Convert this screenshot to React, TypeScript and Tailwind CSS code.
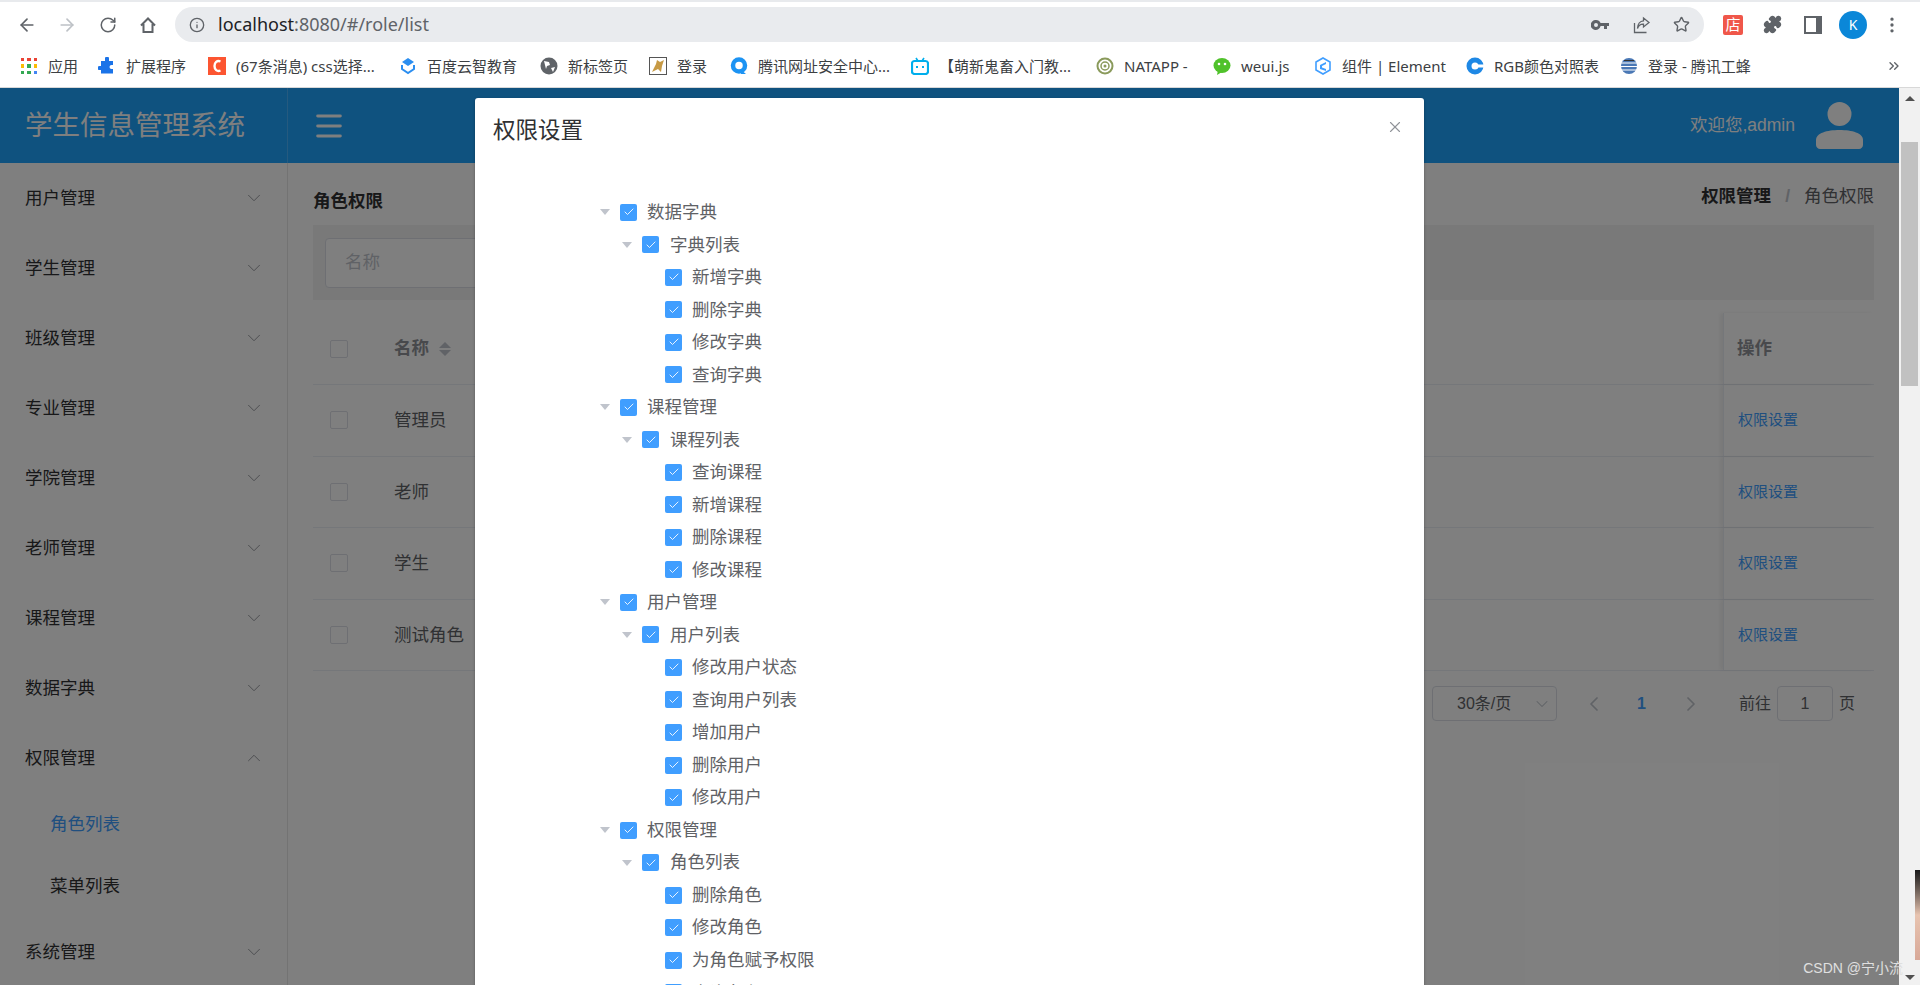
import type { ReactNode } from "react";
import { ChevronDown, ChevronUp, ChevronLeft, ChevronRight, ArrowLeft, ArrowRight, RotateCw, Info, Star, Puzzle, EllipsisVertical, ChevronsRight, X, Check, Menu } from "lucide-react";

const Ico = ({ children }: { children: ReactNode }) => (
  <svg viewBox="0 0 18 18" className="h-[18px] w-[18px] shrink-0">{children}</svg>
);

const appColors = ["#ea4335", "#ea4335", "#ea4335", "#fbbc04", "#34a853", "#fbbc04", "#34a853", "#34a853", "#4285f4"];

const bookmarks: { label: string; w: string; icon: ReactNode }[] = [
  {
    label: "应用",
    w: "w-[78px]",
    icon: (
      <span className="grid h-[18px] w-[18px] shrink-0 grid-cols-3 gap-[3px] p-[1px]">
        {appColors.map((c, i) => (
          <span key={i} style={{ backgroundColor: c }} />
        ))}
      </span>
    ),
  },
  {
    label: "扩展程序",
    w: "w-[110px]",
    icon: (
      <Ico>
        <path fill="#1a73e8" d="M7 1.5a2 2 0 0 1 4 0V4h4v4h-1.5a2 2 0 0 0 0 4H15v4.5H3V13H1.5a2 2 0 0 1 0-4H3V4h4z" />
      </Ico>
    ),
  },
  {
    label: "(67条消息) css选择...",
    w: "w-[191px]",
    icon: (
      <Ico>
        <rect width="18" height="18" fill="#fc5531" />
        <path fill="none" stroke="#fff" strokeWidth="2.4" d="M12.5 4.5C9 3 6.5 5.5 6.5 9s2.5 6 6 4.5" />
      </Ico>
    ),
  },
  {
    label: "百度云智教育",
    w: "w-[141px]",
    icon: (
      <Ico>
        <path fill="#2b8ef0" d="M9 1l6 4-6 4-6-4z" />
        <path fill="none" stroke="#2b8ef0" strokeWidth="2" d="M3 8v4l6 4 6-4V8" />
      </Ico>
    ),
  },
  {
    label: "新标签页",
    w: "w-[109px]",
    icon: (
      <Ico>
        <circle cx="9" cy="9" r="8.5" fill="#5f6368" />
        <path fill="#fff" d="M4 4l5 1 1 3-3 1-1 3zM11 11l4-1-2 5z" />
      </Ico>
    ),
  },
  {
    label: "登录",
    w: "w-[81px]",
    icon: (
      <Ico>
        <rect x="0.5" y="0.5" width="17" height="17" fill="#fff" stroke="#555" />
        <path fill="#c79a45" d="M3 15l4-8 1-4 3 2 4-2-2 6-1 6-3-3z" />
      </Ico>
    ),
  },
  {
    label: "腾讯网址安全中心...",
    w: "w-[181px]",
    icon: (
      <Ico>
        <circle cx="9" cy="8.5" r="6" fill="none" stroke="#1c93f3" strokeWidth="4.5" />
        <path fill="#1c93f3" d="M10 12l6 5-5 0z" />
      </Ico>
    ),
  },
  {
    label: "【萌新鬼畜入门教...",
    w: "w-[185px]",
    icon: (
      <Ico>
        <path stroke="#00aeec" strokeWidth="1.6" d="M5 1l2 3M13 1l-2 3" />
        <rect x="1" y="4" width="16" height="13" rx="2.5" fill="none" stroke="#00aeec" strokeWidth="2.2" />
        <path stroke="#00aeec" strokeWidth="2" d="M6 9v2M12 9v2" />
      </Ico>
    ),
  },
  {
    label: "NATAPP -",
    w: "w-[117px]",
    icon: (
      <Ico>
        <circle cx="9" cy="9" r="7.5" fill="none" stroke="#8a9a5b" strokeWidth="2" />
        <circle cx="9" cy="9" r="4" fill="none" stroke="#8a9a5b" strokeWidth="1.5" />
        <circle cx="9" cy="9" r="1.5" fill="#8a9a5b" />
      </Ico>
    ),
  },
  {
    label: "weui.js",
    w: "w-[101px]",
    icon: (
      <Ico>
        <ellipse cx="9" cy="8.5" rx="8.5" ry="7.5" fill="#50c22b" />
        <path fill="#50c22b" d="M5 13l-1 5 5-3z" />
        <circle cx="6" cy="7" r="1.3" fill="#fff" />
        <circle cx="12" cy="7" r="1.3" fill="#fff" />
      </Ico>
    ),
  },
  {
    label: "组件 | Element",
    w: "w-[152px]",
    icon: (
      <Ico>
        <path fill="none" stroke="#409eff" strokeWidth="1.6" d="M9 1l7 4v8l-7 4-7-4V5z" />
        <path fill="#409eff" d="M12 5L6 8v4l6 2v-2l-4-1.5V9l4-2z" />
      </Ico>
    ),
  },
  {
    label: "RGB颜色对照表",
    w: "w-[154px]",
    icon: (
      <Ico>
        <circle cx="9" cy="9" r="6" fill="none" stroke="#1e88e5" strokeWidth="5" />
        <rect x="11" y="7.5" width="7" height="3" fill="#fff" />
      </Ico>
    ),
  },
  {
    label: "登录 - 腾讯工蜂",
    w: "w-[140px]",
    icon: (
      <Ico>
        <circle cx="9" cy="9" r="8" fill="#4a78b5" />
        <path stroke="#fff" strokeWidth="1.2" d="M1 6h16M1 9.5h16M1 13h16" />
        <path stroke="#333" strokeWidth="1" d="M4 3.5h10" />
      </Ico>
    ),
  },
];

const menus = ["用户管理", "学生管理", "班级管理", "专业管理", "学院管理", "老师管理", "课程管理", "数据字典"];

const rows = ["管理员", "老师", "学生", "测试角色"];

const tree = [
  { name: "数据字典", child: "字典列表", leaves: ["新增字典", "删除字典", "修改字典", "查询字典"] },
  { name: "课程管理", child: "课程列表", leaves: ["查询课程", "新增课程", "删除课程", "修改课程"] },
  { name: "用户管理", child: "用户列表", leaves: ["修改用户状态", "查询用户列表", "增加用户", "删除用户", "修改用户"] },
  { name: "权限管理", child: "角色列表", leaves: ["删除角色", "修改角色", "为角色赋予权限", "查询角色"] },
];

const Box = () => (
  <span className="flex h-[17px] w-[17px] shrink-0 items-center justify-center rounded-[2px] bg-[#409eff]">
    <Check className="h-3 w-3 text-white" strokeWidth={1.75} />
  </span>
);

const Caret = () => <span className="h-0 w-0 shrink-0 border-x-[5px] border-t-[6px] border-x-transparent border-t-[#c0c4cc]" />;

const TreeRow = ({ label, level }: { label: string; level: number }) => (
  <div className={`flex h-[32.52px] items-center text-[17.5px] text-[#606266] ${level === 0 ? "pl-[125px]" : level === 1 ? "pl-[147px]" : "pl-[190px]"}`}>
    {level < 2 && <Caret />}
    <span className={level < 2 ? "ml-[10px]" : ""}>
      <Box />
    </span>
    <span className={level === 1 ? "ml-[11px]" : "ml-[10px]"}>{label}</span>
  </div>
);

const App = () => {
  return (
    <div className="flex h-[985px] w-[1920px] flex-col overflow-hidden bg-white font-['Liberation_Sans','Noto_Sans_CJK_SC',sans-serif]">
      {/* browser chrome */}
      <div className="flex h-[47px] shrink-0 items-center border-t-2 border-[#e8eaed] pl-[17px] pr-[18px] font-['Noto_Sans','Noto_Sans_CJK_SC',sans-serif]">
        <ArrowLeft className="h-5 w-5 text-[#5f6368]" />
        <ArrowRight className="ml-5 h-5 w-5 text-[#bdc1c6]" />
        <RotateCw className="ml-[22px] h-[18px] w-[18px] text-[#5f6368]" />
        <svg viewBox="0 0 18 18" className="ml-[22px] h-[18px] w-[18px] fill-none stroke-[#5f6368] stroke-2">
          <path d="M2 9.5L9 2.5l7 7M4.5 8v8h9V8" />
        </svg>
        <div className="ml-[18px] flex h-[35px] flex-1 items-center rounded-full bg-[#e9ebee] pl-[14px] pr-[14px]">
          <Info className="h-4 w-4 text-[#5f6368]" />
          <span className="ml-[13px] text-[18px] text-[#202124]">
            localhost<span className="text-[#5f6368]">:8080/#/role/list</span>
          </span>
          <svg viewBox="0 0 18 10" className="ml-auto h-[10px] w-[18px] fill-[#5f6368]">
            <path fillRule="evenodd" d="M5 0a5 5 0 0 1 4.6 3H18v3h-2v3h-3V6H9.6A5 5 0 1 1 5 0zm0 3a2 2 0 1 0 0 4 2 2 0 0 0 0-4z" />
          </svg>
          <svg viewBox="0 0 18 18" className="ml-[24px] h-[18px] w-[18px] fill-none stroke-[#5f6368] stroke-[1.3]">
            <path d="M1.5 7v9.5h12M10.5 2l5.5 4.5-5.5 4.5V8.2C7.5 8 5.5 9.5 4.5 12.5 4.5 8 7 5 10.5 4.8z" />
          </svg>
          <Star className="ml-[22px] h-[17px] w-[17px] text-[#5f6368]" />
        </div>
        <span className="ml-[19px] flex h-5 w-5 items-center justify-center rounded-[2px] bg-[#f0574a] text-[15px] leading-none text-white">店</span>
        <Puzzle className="ml-[20px] h-[19px] w-[19px] fill-[#5f6368] text-[#5f6368]" />
        <span className="ml-[22px] h-[18px] w-[18px] border-2 border-r-[6px] border-[#5f6368]" />
        <span className="ml-[17px] flex h-7 w-7 items-center justify-center rounded-full bg-[#0b87d8] text-[14px] text-white">K</span>
        <EllipsisVertical className="ml-[15px] h-5 w-5 text-[#5f6368]" />
      </div>
      <div className="flex h-[40px] shrink-0 items-center pb-[2px] pl-[20px] font-['Noto_Sans','Noto_Sans_CJK_SC',sans-serif] text-[15px] text-[#3c4043]">
        {bookmarks.map((b) => (
          <div key={b.label} className={`flex shrink-0 items-center gap-[10px] ${b.w}`}>
            {b.icon}
            <span className="whitespace-nowrap">{b.label}</span>
          </div>
        ))}
        <ChevronsRight className="ml-auto mr-[18px] h-4 w-4 text-[#5f6368]" />
      </div>

      <div className="relative flex flex-1 overflow-hidden border-t border-[#d8d8d8]">
        {/* page */}
        <div className="flex w-[1899px] flex-col">
          <div className="flex h-[75px] shrink-0 items-center bg-[#1ea4ff]">
            <div className="flex h-full w-[288px] items-center border-r border-[#4ab4ff] pl-[25px] text-[27.5px] text-white">学生信息管理系统</div>
            <Menu className="ml-[24px] h-[34px] w-[34px] text-white" strokeWidth={2.1} />
            <span className="ml-auto text-[17.5px] text-white">欢迎您,admin</span>
            <svg viewBox="0 0 47 47" className="ml-[21px] mr-[36px] h-[47px] w-[47px] fill-white">
              <circle cx="23.5" cy="12" r="12" />
              <path d="M0 38c0-7 11-10 23.5-10S47 31 47 38v5c0 2-2 4-4 4H4c-2 0-4-2-4-4z" />
            </svg>
          </div>
          <div className="flex flex-1">
            <div className="w-[288px] shrink-0 border-r border-[#e6e6e6] text-[17.5px] text-[#303133]">
              {menus.map((m) => (
                <div key={m} className="flex h-[70px] items-center justify-between pl-[25px] pr-[22px]">
                  {m}
                  <ChevronDown className="h-[22px] w-[22px] text-[#909399]" strokeWidth={1} />
                </div>
              ))}
              <div className="flex h-[70px] items-center justify-between pl-[25px] pr-[22px]">
                权限管理
                <ChevronUp className="h-[22px] w-[22px] text-[#909399]" strokeWidth={1} />
              </div>
              <div className="flex h-[62px] items-center pl-[50px] text-[#409eff]">角色列表</div>
              <div className="flex h-[62px] items-center pl-[50px]">菜单列表</div>
              <div className="flex h-[70px] items-center justify-between pl-[25px] pr-[22px]">
                系统管理
                <ChevronDown className="h-[22px] w-[22px] text-[#909399]" strokeWidth={1} />
              </div>
            </div>
            <div className="flex-1 pl-[25px] pr-[25px]">
              <div className="flex h-[62px] items-center justify-between pt-[4px] text-[17.5px]">
                <span className="mt-[10px] font-bold text-[#303133]">角色权限</span>
                <span className="flex items-center text-[#606266]">
                  <b className="text-[#303133]">权限管理</b>
                  <span className="mx-[14px] font-bold text-[#c0c4cc]">/</span>
                  角色权限
                </span>
              </div>
              <div className="flex h-[75px] items-center bg-[#f2f2f2] pl-[12px]">
                <div className="flex h-[50px] w-[300px] items-center rounded border border-[#dcdfe6] bg-white pl-[19px] text-[17.5px] text-[#c0c4cc]">名称</div>
              </div>
              <div className="mt-[13px]">
                <div className="flex h-[72px] items-center border-b border-[#ebeef5] text-[17.5px] font-bold text-[#909399]">
                  <span className="ml-[17px] h-[18px] w-[18px] rounded-[2px] border border-[#dcdfe6] bg-white" />
                  <span className="ml-[46px]">名称</span>
                  <span className="ml-[10px] flex flex-col gap-[2px]">
                    <span className="h-0 w-0 border-x-[6px] border-b-[6px] border-x-transparent border-b-[#c0c4cc]" />
                    <span className="h-0 w-0 border-x-[6px] border-t-[6px] border-x-transparent border-t-[#c0c4cc]" />
                  </span>
                  <div className="ml-auto flex h-full w-[151px] items-center border-l border-[#ebeef5] pl-[13px] shadow-[-3px_0_4px_rgba(0,0,0,0.06)]">操作</div>
                </div>
                {rows.map((r) => (
                  <div key={r} className="flex h-[71.5px] items-center border-b border-[#ebeef5] text-[17.5px] text-[#606266]">
                    <span className="ml-[17px] h-[18px] w-[18px] rounded-[2px] border border-[#dcdfe6] bg-white" />
                    <span className="ml-[46px]">{r}</span>
                    <div className="ml-auto flex h-full w-[151px] items-center border-l border-[#ebeef5] pl-[14px] text-[15px] text-[#409eff] shadow-[-3px_0_4px_rgba(0,0,0,0.06)]">权限设置</div>
                  </div>
                ))}
              </div>
              <div className="mt-[15px] flex items-center justify-end pr-[19px] text-[16px] text-[#606266]">
                <div className="flex h-[35px] w-[125px] items-center rounded border border-[#dcdfe6] pl-[24px] text-[#606266]">
                  30条/页
                  <ChevronDown className="ml-auto mr-[4px] h-[20px] w-[20px] text-[#c0c4cc]" strokeWidth={1.25} />
                </div>
                <ChevronLeft className="ml-[25px] h-6 w-6 text-[#c0c4cc]" strokeWidth={1.75} />
                <span className="ml-[31px] font-bold text-[#409eff]">1</span>
                <ChevronRight className="ml-[33px] h-6 w-6 text-[#c0c4cc]" strokeWidth={1.75} />
                <span className="ml-[36px]">前往</span>
                <div className="ml-[6px] flex h-[35px] w-[56px] items-center justify-center rounded border border-[#dcdfe6]">1</div>
                <span className="ml-[6px]">页</span>
              </div>
            </div>
          </div>
        </div>

        {/* scrollbar */}
        <div className="flex w-[21px] flex-col items-center bg-[#f1f1f1]">
          <span className="mt-[8px] h-0 w-0 border-x-[5px] border-b-[5px] border-x-transparent border-b-[#505050]" />
          <span className="mt-[41px] h-[244px] w-[17px] bg-[#c1c1c1]" />
          <span className="mb-[5px] mt-auto h-0 w-0 border-x-[5px] border-t-[5px] border-x-transparent border-t-[#505050]" />
        </div>

        {/* mask */}
        <div className="absolute inset-y-0 left-0 w-[1899px] bg-black/50" />

        {/* dialog */}
        <div className="absolute left-[475px] top-[10px] h-[1100px] w-[949px] rounded-[3px] bg-white shadow-[0_1px_3px_rgba(0,0,0,0.3)]">
          <div className="flex h-[66px] items-center justify-between pl-[18px] pr-[20px] text-[22.5px] text-[#303133]">
            权限设置
            <X className="-mt-[8px] h-[18px] w-[18px] text-[#909399]" strokeWidth={1.5} />
          </div>
          <div className="pt-[32px]">
            {tree.map((t) => (
              <div key={t.name}>
                <TreeRow label={t.name} level={0} />
                <TreeRow label={t.child} level={1} />
                {t.leaves.map((l) => (
                  <TreeRow key={l} label={l} level={2} />
                ))}
              </div>
            ))}
          </div>
        </div>

        {/* sliver of a floating picture at the window edge */}
        <div className="absolute right-0 top-[782px] h-[90px] w-[5px] bg-gradient-to-b from-[#1a1a1a] via-[#e8c4b0] to-[#d8a898]" />

        <div className="absolute bottom-[6px] right-[17px] text-[14px] text-[#e0e0e0]">CSDN @宁小流</div>
      </div>
    </div>
  );
};

export default App;
